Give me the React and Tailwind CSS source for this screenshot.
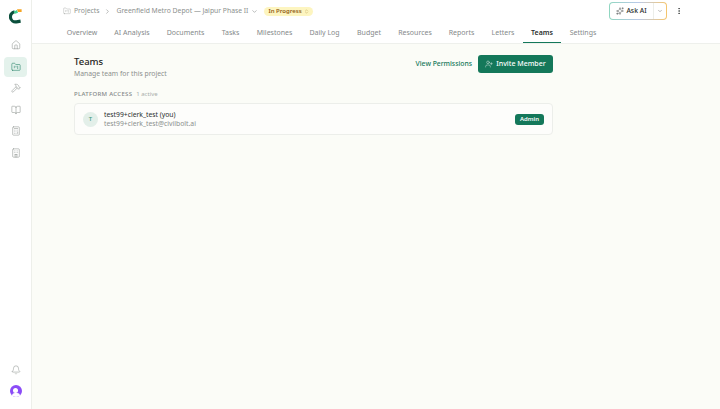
import React from 'react';
import {
  Bell,
  BookOpen,
  Calculator,
  ChevronDown,
  ChevronRight,
  ChevronsUpDown,
  EllipsisVertical,
  FolderKanban,
  Hammer,
  Home,
  Hotel,
  Sparkles,
  UserPlus,
} from 'lucide-react';

const tabs = [
  { label: 'Overview', w: 'w-[48px]' },
  { label: 'AI Analysis', w: 'w-[52px]' },
  { label: 'Documents', w: 'w-[55px]' },
  { label: 'Tasks', w: 'w-[35px]' },
  { label: 'Milestones', w: 'w-[53px]' },
  { label: 'Daily Log', w: 'w-[47px]' },
  { label: 'Budget', w: 'w-[42px]' },
  { label: 'Resources', w: 'w-[50px]' },
  { label: 'Reports', w: 'w-[43px]' },
  { label: 'Letters', w: 'w-[40px]' },
  { label: 'Teams', w: 'w-[38px]', active: true },
  { label: 'Settings', w: 'w-[44px]' },
];

const navIcons = [Home, FolderKanban, Hammer, BookOpen, Calculator, Hotel];

function Logo() {
  return (
    <svg width="14" height="17" viewBox="0 0 14 17" fill="none">
      <path d="M5.6 3.8 A5 5 0 0 0 7.4 13.8 L11.6 13.2" stroke="#0b4f3c" strokeWidth="3.2" />
      <path d="M4.6 3.8 L8 2 L9 4.8 L6 5.8 Z" fill="#3fcf8e" />
      <path d="M8 1.2 L12.6 1.2 L12.6 4 L9 4 Z" fill="#f5a524" />
    </svg>
  );
}

function Sidebar() {
  return (
    <aside className="flex w-[32px] shrink-0 flex-col items-center border-r border-[#edefea] bg-white pt-[8px] pb-[12px]">
      <Logo />
      <nav className="mt-[10px] flex flex-col items-center gap-[1.6px]">
        {navIcons.map((Icon, i) => (
          <div
            key={i}
            className={`flex h-[20px] w-[23px] items-center justify-center rounded-[4px] ${
              i === 1 ? 'bg-[#e4f2ec] text-[#14785a]' : 'text-[#8a8f8c]'
            }`}
          >
            <Icon size={10} strokeWidth={1.25} />
          </div>
        ))}
      </nav>
      <div className="mt-auto flex flex-col items-center gap-[10px]">
        <Bell size={10} strokeWidth={1.25} className="text-[#8a8f8c]" />
        <div className="relative h-[12px] w-[12px] overflow-hidden rounded-full bg-[#8b4cf7]">
          <div className="absolute left-[3.5px] top-[3px] h-[5px] w-[5px] rounded-full bg-white" />
          <div className="absolute left-[2px] top-[8px] h-[6px] w-[8px] rounded-full bg-white" />
        </div>
      </div>
    </aside>
  );
}

function Header() {
  return (
    <header className="border-b border-[#eef0ec] bg-white">
      <div className="flex h-[22px] items-center pl-[31px] pr-[37px] text-[6.8px] text-[#8b8f8d]">
        <FolderKanban size={8} strokeWidth={1} className="mr-[3px]" />
        <span>Projects</span>
        <ChevronRight size={7} className="mx-[5px]" />
        <span>Greenfield Metro Depot — Jaipur Phase II</span>
        <ChevronDown size={7} className="ml-[3px]" />
        <span className="ml-[6px] flex h-[9px] items-center gap-[2px] rounded-full bg-[#fdf5c0] px-[4px] text-[6px] font-semibold text-[#92601a]">
          In Progress
          <ChevronsUpDown size={5} className="text-[#b69a4a]" />
        </span>
        <div className="ml-auto flex items-center gap-[8px] text-[#2a2f2d]">
          <div className="rounded-[4px] bg-gradient-to-r from-[#8fd6c0] via-[#b9c9e8] to-[#f5c56b] p-[1px]">
            <div className="flex h-[16px] w-[56px] items-center rounded-[3px] bg-white">
              <div className="flex flex-1 items-center justify-center gap-[2px] font-medium">
                <Sparkles size={8} strokeWidth={1.25} />
                Ask AI
              </div>
              <div className="flex h-full w-[13px] items-center justify-center border-l border-[#eceeea] text-[#777]">
                <ChevronDown size={6} />
              </div>
            </div>
          </div>
          <EllipsisVertical size={8} />
        </div>
      </div>
      <div className="flex h-[21px] pl-[26px]">
        {tabs.map((tab) => (
          <div
            key={tab.label}
            className={`flex ${tab.w} h-full shrink-0 items-center justify-center whitespace-nowrap border-b pt-[2px] text-[7px] ${
              tab.active
                ? 'border-[#14785a] font-semibold text-[#2a2f2d]'
                : 'border-transparent text-[#85898a]'
            }`}
          >
            {tab.label}
          </div>
        ))}
      </div>
    </header>
  );
}

function MemberRow() {
  return (
    <div className="mt-[4px] flex h-[32px] items-center rounded-[4px] border border-[#eceeea] bg-[#fdfdfb] pl-[8px] pr-[8px]">
      <div className="flex h-[15px] w-[15px] items-center justify-center rounded-full bg-[#e3efe9] text-[6px] font-medium text-[#3f9c7c]">
        T
      </div>
      <div className="ml-[6px] leading-[9.5px]">
        <div className="text-[6.8px] text-[#2a2f2d]">test99+clerk_test (you)</div>
        <div className="text-[6.8px] text-[#8b8f8d]">test99+clerk_test@civilbolt.ai</div>
      </div>
      <span className="ml-auto flex h-[11px] w-[29px] items-center justify-center rounded-[3px] bg-[#14785a] text-[6px] font-semibold text-white">
        Admin
      </span>
    </div>
  );
}

export default function App() {
  return (
    <div className="flex h-[409px] w-[720px] overflow-hidden bg-[#fbfcf7] font-['Noto_Sans',sans-serif]">
      <Sidebar />
      <div className="flex min-w-0 flex-1 flex-col">
        <Header />
        <main className="w-[521px] pl-[42px] pt-[11px]">
          <div className="flex items-start justify-between">
            <div>
              <h1 className="text-[9.5px] font-medium leading-[14px] text-[#1f2422]">Teams</h1>
              <p className="text-[6.8px] leading-[9px] text-[#8b8f8d]">Manage team for this project</p>
            </div>
            <div className="flex items-center gap-[6px]">
              <span className="text-[6.8px] font-medium text-[#14785a]">View Permissions</span>
              <button className="flex h-[18px] w-[75px] items-center justify-center gap-[3px] rounded-[3px] bg-[#14785a] text-[7px] font-medium text-white">
                <UserPlus size={8} strokeWidth={1.25} />
                Invite Member
              </button>
            </div>
          </div>
          <div className="mt-[12px] flex items-baseline gap-[4px] leading-[9px]">
            <span className="text-[6px] font-medium tracking-[0.3px] text-[#85898a]">PLATFORM ACCESS</span>
            <span className="text-[6px] text-[#a9adab]">1 active</span>
          </div>
          <MemberRow />
        </main>
      </div>
    </div>
  );
}
